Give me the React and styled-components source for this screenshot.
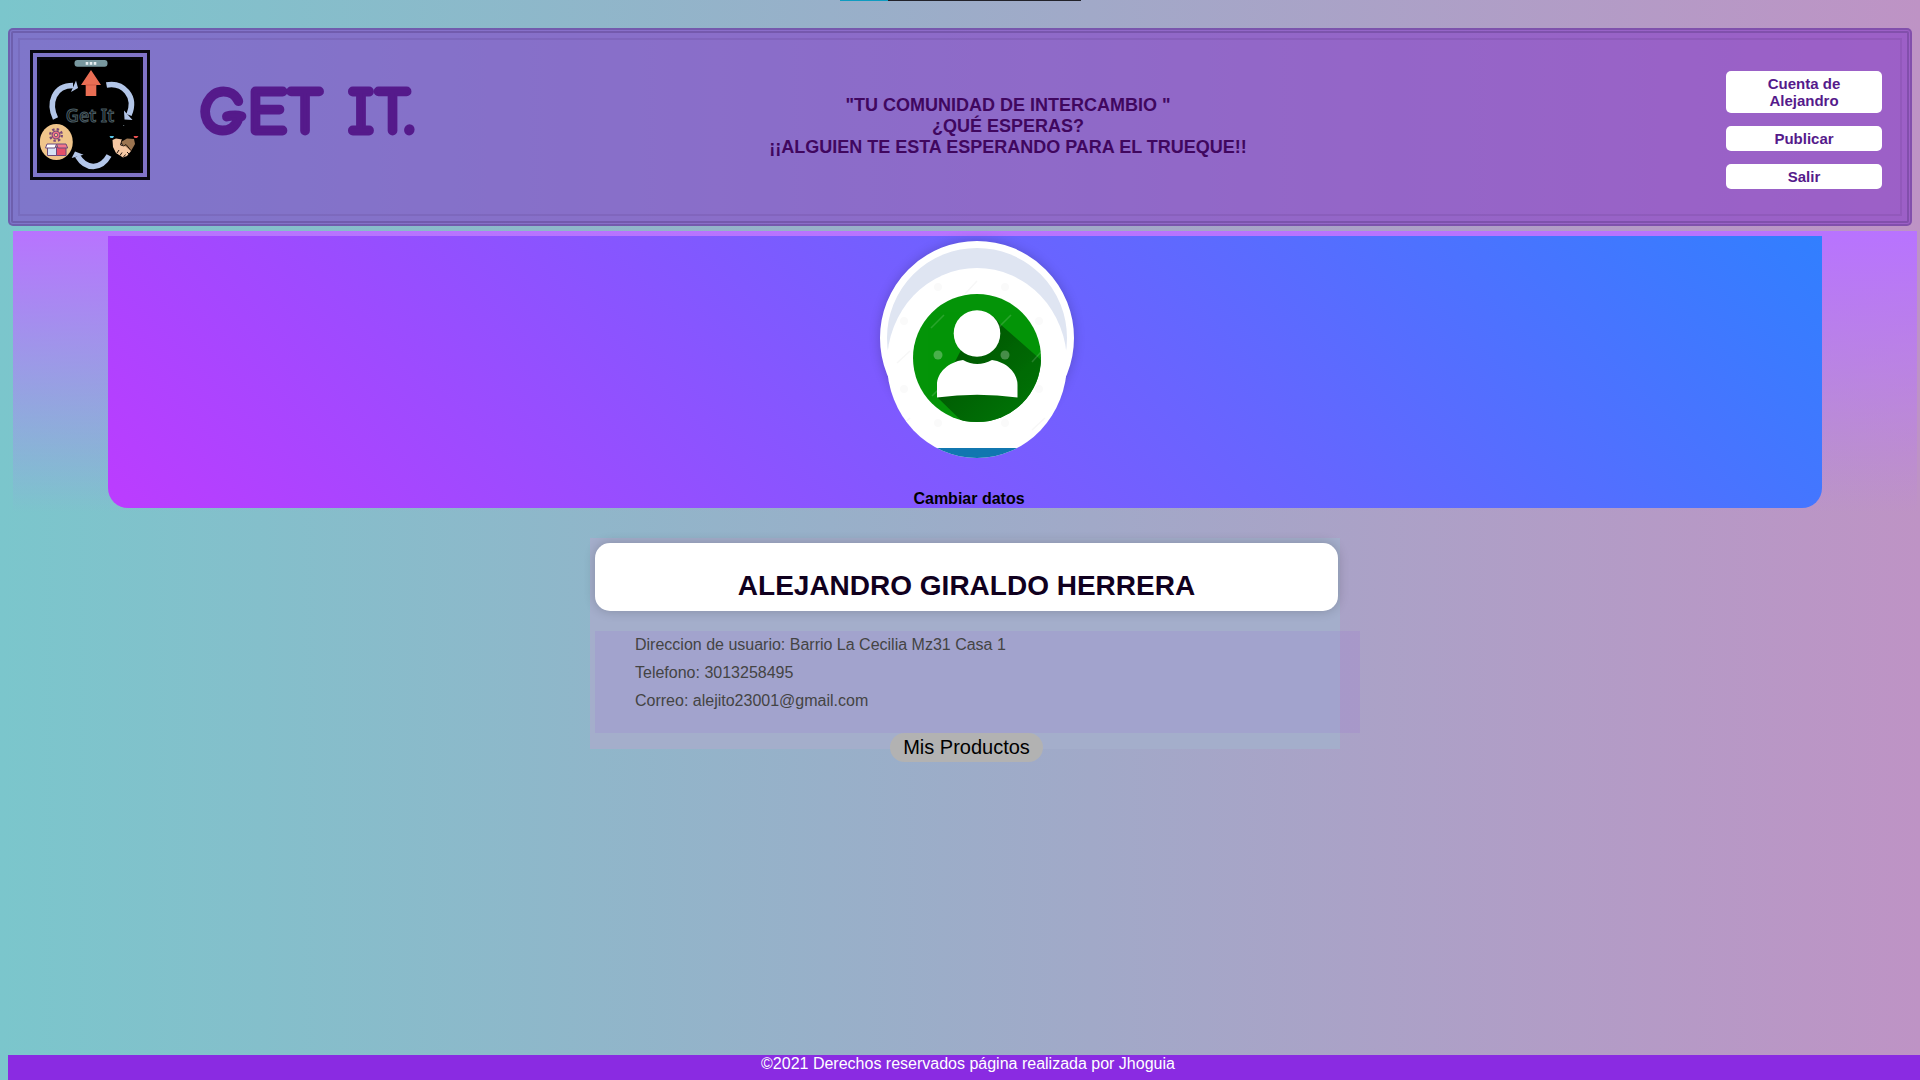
import React from "react";
import styled, { createGlobalStyle } from "styled-components";

const Global = createGlobalStyle`
  *, *::before, *::after { box-sizing: border-box; }
  body {
    margin: 0;
    font-family: "Liberation Sans", Arial, sans-serif;
    font-size: 16px;
    line-height: 18px;
    background: linear-gradient(to right, #7bc6cc, #be93c5);
  }
  h1, h2, p, ul { margin: 0; padding: 0; }
  ul { list-style: none; }
  a { text-decoration: none; }
`;

const Page = styled.div`
  min-height: 100vh;
  display: flex;
  flex-direction: column;
`;

const LoadBar = styled.div`
  align-self: center;
  width: 241px;
  height: 1px;
  margin-bottom: 27px;
  background: linear-gradient(to right, #0f9bc0 48px, #22222a 48px);
`;

const Header = styled.header`
  margin: 0 8px;
  padding: 5px;
  border: 5px double rgba(70, 40, 110, 0.3);
  border-radius: 5px;
  background: rgba(130, 52, 200, 0.55);
`;

const HeaderGrid = styled.div`
  display: grid;
  grid-template-columns: 120px 232px 1fr 297px;
  align-items: start;
  min-height: 178px;
  padding: 10px 18px 10px 10px;
  border: 2px solid rgba(70, 40, 110, 0.12);
`;

const LogoFrame = styled.div`
  border: 10px double #08080e;
  height: 130px;
  svg { display: block; }
`;

const Brand = styled.h1`
  margin: 30px 0 0 49px;
  font-family: "Comic Sans MS", "Comic Neue", "Noto Sans", sans-serif;
  font-size: 68px;
  line-height: 64px;
  font-weight: 900;
  white-space: nowrap;
  -webkit-text-stroke: 3px #551a8b;
  a { color: #551a8b; }
`;

const Slogan = styled.p`
  margin-top: 45px;
  padding-left: 49px;
  text-align: center;
  font-size: 18px;
  line-height: 21px;
  font-weight: bold;
  color: #40075f;
`;

const Nav = styled.nav`
  justify-self: end;
  width: 156px;
  margin-top: 21px;
  display: flex;
  flex-direction: column;
  gap: 13px;
`;

const NavLink = styled.a`
  padding: 4px 20px;
  border-radius: 5px;
  background: #fff;
  color: #551a8b;
  font-size: 15px;
  line-height: 17px;
  font-weight: bold;
  text-align: center;
`;

const Profile = styled.section`
  margin: 5px 3px 0 13px;
  padding: 5px 0;
  background: linear-gradient(#b873ff, transparent);
`;

const Cover = styled.div`
  width: 90%;
  height: 272px;
  margin: 0 auto;
  padding-top: 5px;
  display: flex;
  flex-direction: column;
  align-items: center;
  justify-content: space-between;
  border-radius: 0 0 20px 20px;
  background: linear-gradient(45deg, #bc3cff, #317fff);
`;

const Avatar = styled.div`
  width: 194px;
  height: 194px;
  margin-left: 24px;
  padding-top: 20px;
  border: 7px solid #fff;
  border-radius: 50%;
  background: #dfe5f2;
  box-shadow: 0 0 12px rgba(0, 0, 0, 0.2);
  svg { display: block; border-radius: 50%; }
`;

const EditLink = styled.a`
  margin-left: 8px;
  color: #000;
  font-weight: bold;
`;

const Details = styled.section`
  width: 750px;
  height: 211px;
  margin: 25px auto 0;
  padding: 5px 2px 0 5px;
  display: flex;
  flex-direction: column;
  background: #a4aecb;
`;

const Content = styled.main`
  display: flex;
  flex-direction: column;
`;

const DetailsRow = styled.div`
  padding-left: 10px;
`;

const NameCard = styled.div`
  flex: none;
  height: 68px;
  padding-top: 27px;
  border-radius: 15px;
  background: #fff;
  box-shadow: 0 0 12px rgba(0, 0, 0, 0.2);
  text-align: center;
`;

const Name = styled.h2`
  font-size: 28px;
  line-height: 32px;
  color: #10001e;
`;

const Facts = styled.ul`
  flex: none;
  height: 102px;
  margin: 20px -22px 0 0;
  padding-left: 40px;
  background: rgba(138, 43, 226, 0.08);
`;

const Fact = styled.li`
  padding: 5px 0;
  color: #444;
`;

const Products = styled.a`
  flex: none;
  align-self: center;
  padding: 3px 13px;
  border-radius: 15px;
  background: #b2b2b2;
  color: #000;
  font-size: 20px;
  line-height: 23px;
`;

const Footer = styled.footer`
  margin: auto 0 0 8px;
  height: 25px;
  padding-left: 8px;
  background: blueviolet;
  color: #fff;
  text-align: center;
`;

function Logo() {
  return (
    <svg width="100" height="110" viewBox="0 0 100 110" role="img" aria-label="Get It">
      <rect width="100" height="110" fill="#000" />
      <rect x="34.5" y="0" width="33" height="6.8" rx="3" fill="#78989f" />
      <g fill="#e6eef0">
        <rect x="45.7" y="2" width="2.6" height="2.8" />
        <rect x="49.7" y="2" width="2.6" height="2.8" />
        <rect x="53.7" y="2" width="2.6" height="2.8" />
      </g>
      <path d="M51 10 61 25H56.3V36H45.7V25H41Z" fill="#ea6e54" />
      <path d="M45.7 25H56.3" stroke="#c9543f" strokeWidth="0.8" />
      <g fill="none" stroke="#b3c6e8" strokeWidth="5.6">
        <path d="M15.5 58.5C8 43 14 25.5 33 25.5" />
        <path d="M66.5 25C83 22 97 36 89 55" />
        <path d="M69 95.5C61 110 46 110 37.5 96" />
      </g>
      <g fill="#b3c6e8">
        <path d="M36 20.5 38 28 31 32Z" />
        <path d="M84 50.5 92.5 60 84.5 59.5Z" />
        <path d="M31.7 98 35 91.5 43.5 94.8Z" />
      </g>
      <text x="50" y="62" textAnchor="middle" fontFamily="Noto Sans, sans-serif" fontSize="18" fontWeight="500" fill="#050808" stroke="#4a5c63" strokeWidth="1">Get It</text>
      <ellipse cx="16.3" cy="82" rx="16.5" ry="18" fill="#f0c58b" />
      <circle cx="16" cy="75" r="5.8" fill="none" stroke="#7a4a78" strokeWidth="2.4" strokeDasharray="2.4 2.15" />
      <circle cx="16" cy="75" r="4" fill="#ee7186" stroke="#7a4a78" strokeWidth="1" />
      <circle cx="16" cy="75" r="1.7" fill="#f0c58b" stroke="#7a4a78" strokeWidth="0.9" />
      <g stroke="#6b4a7c" strokeWidth="1">
        <path d="M7.5 87H16.5V95.5H7.5Z" fill="#d5e3f5" />
        <path d="M16.5 87H26V95.5H16.5Z" fill="#e65069" />
        <path d="M7 84H16.5L15 88H5.5Z" fill="#fff" />
        <path d="M16.5 84H26L27.7 88H18Z" fill="#f4778b" />
      </g>
      <path d="M69.5 76H74L73 78H70.5Z" fill="#59c4e6" />
      <path d="M93.5 76H98.5L97 78H94.5Z" fill="#e8504f" />
      <path d="M81 82 87 78.5 94 79 95 84 91 91 87 90Z" fill="#9b7450" />
      <path d="M72.5 80 76 78.5 82 79.5 81 84 85 86 91 91 87 96 83 97.5 76 93 73 87Z" fill="#f5c7a3" />
      <path d="M82 80 80.5 85 84 86 86 84.5 91 90.5M77 93 79 90M80 95.5 82 92.5M83.5 97 85.5 94.5M87 92 89 94" fill="none" stroke="#241811" strokeWidth="1" />
      <circle cx="83.7" cy="65.5" r="0.6" fill="#738087" />
    </svg>
  );
}

function Portrait() {
  return (
    <svg width="180" height="190" viewBox="0 0 180 190" role="img" aria-label="Foto de perfil">
      <defs>
        <linearGradient id="shade" x1="0" y1="0" x2="1" y2="1">
          <stop offset="0.3" stopColor="#005c03" />
          <stop offset="1" stopColor="#008008" />
        </linearGradient>
        <clipPath id="disc"><circle cx="90" cy="90" r="64" /></clipPath>
      </defs>
      <rect width="180" height="190" fill="#fff" />
      <rect y="180" width="180" height="10" fill="#1177b0" />
      <circle cx="90" cy="90" r="64" fill="#049408" />
      <path clipPath="url(#disc)" d="M74 82 107 49 113 56 170 106V170H92L50 129Z" fill="url(#shade)" />
      <circle cx="90" cy="65.5" r="23.3" fill="#fff" />
      <path d="M50 129.5V117C50 104 62 94 76 92Q90 100 105 92C119 94 130.5 104 130.5 117V129.5Q90 124 50 129.5Z" fill="#fff" />
      <g fill="#fff" opacity="0.28">
        <circle cx="51" cy="87" r="4.5" />
        <circle cx="118" cy="87" r="4.5" />
      </g>
      <g stroke="#fff" strokeWidth="1.5" opacity="0.15">
        <path d="M44 60 57 47M111 60 124 47M145 94 154 84M45 128 57 116" />
      </g>
      <g stroke="#f7f7f7" strokeWidth="1.5">
        <path d="M78 26 90 13M10 95 23 83M10 162 23 150M145 162 158 150" />
      </g>
      <g fill="#fafafa">
        <circle cx="51" cy="19" r="4" />
        <circle cx="118" cy="19" r="4" />
        <circle cx="17" cy="53" r="4" />
        <circle cx="152" cy="53" r="4" />
        <circle cx="17" cy="121" r="4" />
        <circle cx="152" cy="121" r="4" />
        <circle cx="51" cy="155" r="4" />
        <circle cx="118" cy="155" r="4" />
      </g>
    </svg>
  );
}

const links = ["Cuenta de Alejandro", "Publicar", "Salir"];
const facts = [
  "Direccion de usuario: Barrio La Cecilia Mz31 Casa 1",
  "Telefono: 3013258495",
  "Correo: alejito23001@gmail.com",
];

export default function App() {
  return (
    <Page>
      <Global />
      <LoadBar />
      <Header>
        <HeaderGrid>
          <LogoFrame><Logo /></LogoFrame>
          <Brand><a href="#inicio">GET IT.</a></Brand>
          <Slogan>
            "TU COMUNIDAD DE INTERCAMBIO "<br />
            ¿QUÉ ESPERAS?<br />
            ¡¡ALGUIEN TE ESTA ESPERANDO PARA EL TRUEQUE!!
          </Slogan>
          <Nav>
            {links.map((label) => (
              <NavLink key={label} href="#menu">{label}</NavLink>
            ))}
          </Nav>
        </HeaderGrid>
      </Header>
      <Content>
        <Profile>
          <Cover>
            <Avatar><Portrait /></Avatar>
            <EditLink href="#datos">Cambiar datos</EditLink>
          </Cover>
        </Profile>
        <DetailsRow>
          <Details>
            <NameCard><Name>ALEJANDRO GIRALDO HERRERA</Name></NameCard>
            <Facts>
              {facts.map((text) => (
                <Fact key={text}>{text}</Fact>
              ))}
            </Facts>
            <Products href="#productos">Mis Productos</Products>
          </Details>
        </DetailsRow>
      </Content>
      <Footer>©2021 Derechos reservados página realizada por Jhoguia</Footer>
    </Page>
  );
}
